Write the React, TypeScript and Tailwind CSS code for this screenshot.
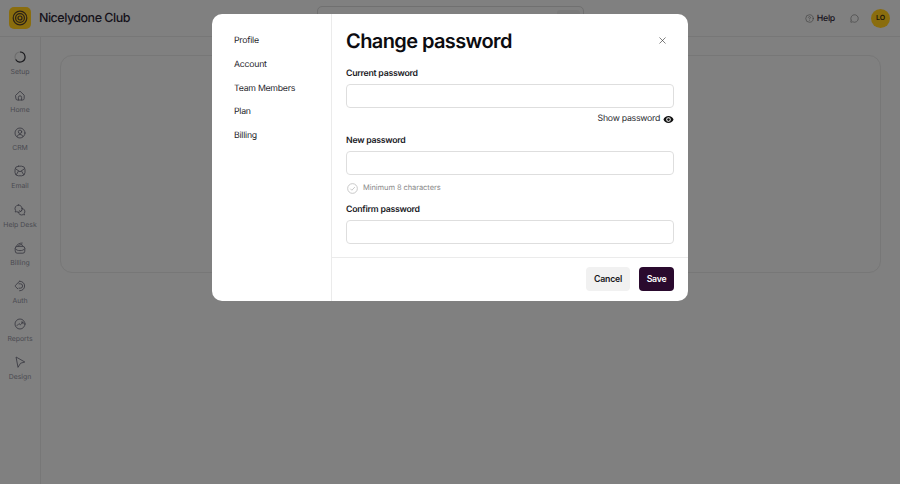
import { X, MessageCircle, CircleHelp } from "lucide-react";

const NAV_ICONS: Record<string, React.ReactNode> = {
  Home: (
    <>
      <path d="M1.8 6.2 6 2.2l4.2 4v3.2a1.6 1.6 0 0 1-1.6 1.6H3.4a1.6 1.6 0 0 1-1.6-1.6z" />
      <path d="M4.4 11V8.4a1.6 1.6 0 0 1 3.2 0V11" />
    </>
  ),
  CRM: (
    <>
      <circle cx="6" cy="6" r="5" />
      <circle cx="6" cy="4.8" r="1.7" />
      <path d="M3 9.6c.4-1.4 1.6-2.1 3-2.1s2.6.7 3 2.1" />
    </>
  ),
  Email: (
    <>
      <rect x="1" y="1.2" width="10" height="9.6" rx="3.4" />
      <path d="M1.6 3.8 6 6.8l4.4-3M2.4 9.6l2-3.4M9.6 9.6l-2-3.4" />
    </>
  ),
  "Help Desk": (
    <>
      <path d="M4.6 1a3.6 3.6 0 0 0-3 5.6L1.2 8l1.5-.3A3.6 3.6 0 1 0 4.6 1z" />
      <path d="M7.6 4.2a3.4 3.4 0 0 1 2.6 5.4l.4 1.3-1.4-.3a3.4 3.4 0 0 1-5-2.4" />
      <path d="M5.6 6.6 6.8 7.6 8.2 5.8" />
    </>
  ),
  Billing: (
    <>
      <path d="M1.2 6.4a2 2 0 0 1 2-2h5.6a2 2 0 0 1 2 2v2.8a2 2 0 0 1-2 2H3.2a2 2 0 0 1-2-2z" />
      <path d="M2 4.6C3 2.6 5 1 8.2 1M3.8 4.4c.8-1.2 2.2-1.9 4-1.9l1 1.9" />
      <path d="M1.4 6.8c1 1.4 2.6 1.8 4.6 1.8s3.6-.4 4.6-1.8" />
    </>
  ),
  Auth: (
    <>
      <path d="M5.6 1.2c2.8 0 5 2 5 4.8s-2.2 4.8-5 4.8" />
      <path d="M5.6 1.2 1.4 5.4a.9.9 0 0 0 0 1.2l2.4 2.2" />
      <path d="M5 3.8h1.4a2.2 2.2 0 0 1 0 4.4H5" />
    </>
  ),
  Reports: (
    <>
      <circle cx="6" cy="6" r="5" />
      <path d="M3 7.6 5 5.6l1.4 1.2L9 4.2" />
      <path d="M7.4 4.1H9v1.6" />
    </>
  ),
  Design: <path d="M2.4 1.2 10.8 6 6.6 7.2 4.2 11z" />,
};

const NAV = ["Home", "CRM", "Email", "Help Desk", "Billing", "Auth", "Reports", "Design"];
const TABS = ["Profile", "Account", "Team Members", "Plan", "Billing"];

function Field({ label }: { label: string }) {
  return (
    <div>
      <label className="block text-[8.75px] leading-[13px] font-semibold tracking-[-0.03em] text-[#1a1a1f]">{label}</label>
      <div className="mt-[3px] h-[24px] rounded-[4px] border border-[#dedede] bg-white" />
    </div>
  );
}

export default function App() {
  return (
    <div className="relative h-[484px] w-[900px] overflow-hidden bg-[#808080] text-[#17121c] [font-family:Inter,sans-serif] [text-rendering:geometricPrecision]">
      {/* top bar */}
      <header className="flex h-[37px] items-center border-b border-[#777777] pl-[9px] pr-[10px]">
        <div className="flex h-[22px] w-[22px] items-center justify-center rounded-[5px] bg-[#8a6d0e]">
          <svg viewBox="0 0 16 16" className="h-[16px] w-[16px]" fill="none" stroke="#2a2118" strokeWidth="1.2">
            <circle cx="8" cy="8" r="6.8" />
            <circle cx="8" cy="8" r="4.4" />
            <circle cx="8" cy="8" r="2" />
          </svg>
        </div>
        <span className="ml-[8px] w-[90px] whitespace-nowrap pt-[3px] text-[12.5px] font-medium tracking-[-0.04em] text-[#15121a]">Nicelydone Club</span>
        <div className="ml-[188px] flex h-[24px] w-[267px] justify-end rounded-[5px] border border-[#707070] pr-[3px] pt-[3px]">
          <div className="h-[16px] w-[23px] rounded-[3px] bg-[#7a7a7a]" />
        </div>
        <div className="ml-auto flex items-center">
          <CircleHelp className="h-[9px] w-[9px] text-[#3a3a3a]" strokeWidth={1.5} />
          <span className="ml-[3px] pt-[3px] text-[8.75px] font-medium tracking-[-0.03em]">Help</span>
          <MessageCircle className="ml-[15px] h-[9px] w-[9px] text-[#3a3a3a]" strokeWidth={1.5} />
          <div className="ml-[12px] flex h-[19px] w-[19px] items-center justify-center rounded-full bg-[#8a6d0e] text-[7px] font-semibold text-[#1a1408]">
            LO
          </div>
        </div>
      </header>

      <div className="flex h-[447px]">
        {/* side nav */}
        <aside className="flex w-[41px] shrink-0 flex-col items-center border-r border-[#777777] pt-[14px] text-[#3c3c44]">
          <div className="flex h-[38.125px] flex-col items-center">
            <svg viewBox="0 0 12 12" className="h-[12px] w-[12px]" fill="none">
              <circle cx="6" cy="6" r="5" stroke="#6c6c6c" strokeWidth="1.1" />
              <path d="M6 1a5 5 0 1 1-4.3 7.5" stroke="#1b1b1f" strokeWidth="1.1" />
            </svg>
            <span className="mt-[4px] whitespace-nowrap text-[6.9px] leading-[9px] text-[#4a4a50]">Setup</span>
          </div>
          {NAV.map((label) => (
            <div key={label} className="flex h-[38.125px] flex-col items-center">
              <svg viewBox="0 0 12 12" className="h-[12px] w-[12px]" fill="none" stroke="currentColor" strokeWidth="0.9" strokeLinecap="round" strokeLinejoin="round">
                {NAV_ICONS[label]}
              </svg>
              <span className="mt-[4px] whitespace-nowrap text-[6.9px] leading-[9px] text-[#4a4a50]">{label}</span>
            </div>
          ))}
        </aside>

        {/* page content under the overlay */}
        <main className="flex-1 px-[19px] pt-[18px]">
          <div className="h-[218px] rounded-[12px] border border-[#777777]" />
        </main>
      </div>

      {/* change password modal */}
      <div className="absolute left-[212px] top-[14px] flex h-[287px] w-[476px] overflow-hidden rounded-[10px] bg-white">
        <nav className="flex w-[120px] shrink-0 flex-col gap-[9.8px] border-r border-[#ebebeb] pl-[22px] pt-[20px] text-[#26262b]">
          {TABS.map((t) => (
            <span key={t} className="text-[8.75px] leading-[14px] tracking-[-0.03em]">
              {t}
            </span>
          ))}
        </nav>
        <div className="flex min-w-0 flex-1 flex-col">
          <div className="flex-1 px-[14px]">
            <div className="flex items-center justify-between pt-[13px]">
              <h2 className="text-[20px] leading-[28px] font-semibold tracking-[-0.03em] text-[#0c0c10]">Change password</h2>
              <X className="mb-[2px] mr-[6px] h-[11px] w-[11px] text-[#3a3a3a]" strokeWidth={1.4} />
            </div>
            <div className="mt-[13px]">
              <Field label="Current password" />
            </div>
            <div className="mt-[4px] flex items-center justify-end text-[#2a2a2f]">
              <span className="text-[8.75px] leading-[14px] tracking-[-0.03em]">Show password</span>
              <svg viewBox="0 0 24 24" className="ml-[3px] h-[11px] w-[11px]" fill="#111111">
                <path d="M12 4.5C7 4.5 2.7 7.6 1 12c1.7 4.4 6 7.5 11 7.5s9.3-3.1 11-7.5c-1.7-4.4-6-7.5-11-7.5zm0 12.5a5 5 0 1 1 0-10 5 5 0 0 1 0 10zm0-8a3 3 0 1 0 0 6 3 3 0 0 0 0-6z" />
              </svg>
            </div>
            <div className="mt-[9px]">
              <Field label="New password" />
            </div>
            <div className="mt-[7px] flex items-center">
              <svg viewBox="0 0 12 12" className="ml-[1px] h-[11px] w-[11px]" fill="none" stroke="#bdbdbd" strokeWidth="0.9">
                <circle cx="6" cy="6" r="5.3" />
                <path d="M3.6 6.2 5.3 7.9 8.6 4.4" />
              </svg>
              <span className="ml-[5px] text-[7.5px] leading-[12px] tracking-[-0.01em] text-[#8a8a8a]">Minimum 8 characters</span>
            </div>
            <div className="mt-[10px]">
              <Field label="Confirm password" />
            </div>
          </div>
          <footer className="flex h-[44px] items-center justify-end gap-[9px] border-t border-[#ebebeb] px-[14px] pb-[1px]">
            <button className="h-[24px] w-[44px] rounded-[4px] bg-[#f1f1f1] pt-[1px] text-[8.75px] font-semibold tracking-[-0.03em] text-[#17171b]">Cancel</button>
            <button className="h-[24px] w-[35px] rounded-[4px] bg-[#2a0a2e] pt-[1px] text-[8.75px] font-semibold tracking-[-0.03em] text-white">Save</button>
          </footer>
        </div>
      </div>
    </div>
  );
}
